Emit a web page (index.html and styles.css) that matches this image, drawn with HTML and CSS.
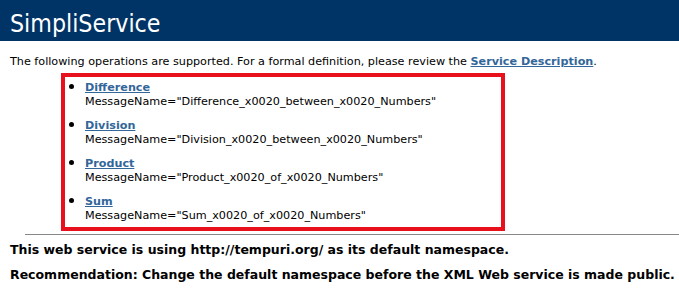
FILE: index.html
```html
<!DOCTYPE html>
<html>
<head>
<meta charset="utf-8">
<title>SimpliService Web Service</title>
<link rel="stylesheet" href="styles.css">
</head>
<body>
<div class="heading1">SimpliService</div>
<div class="content">
  <p class="intro">The following operations are supported. For a formal definition, please review the <a href="#">Service Description</a>.</p>
  <ul class="ops">
    <li><a href="#">Difference</a><br><span>MessageName="Difference_x0020_between_x0020_Numbers"</span></li>
    <li><a href="#">Division</a><br><span>MessageName="Division_x0020_between_x0020_Numbers"</span></li>
    <li><a href="#">Product</a><br><span>MessageName="Product_x0020_of_x0020_Numbers"</span></li>
    <li><a href="#">Sum</a><br><span>MessageName="Sum_x0020_of_x0020_Numbers"</span></li>
  </ul>
  <hr class="rule">
  <h3 class="ns first">This web service is using http://tempuri.org/ as its default namespace.</h3>
  <h3 class="ns">Recommendation: Change the default namespace before the XML Web service is made public.</h3>
</div>
</body>
</html>
```
FILE: styles.css
```css
html, body {
  margin: 0;
  padding: 0;
  background: #fff;
  color: #000;
  font-family: "DejaVu Sans", Verdana, sans-serif;
}
.heading1 {
  background: #003366;
  color: #fff;
  font-family: "DejaVu Sans Condensed", "DejaVu Sans", sans-serif;
  font-size: 24.7px;
  height: 41px;
  line-height: 48px;
  padding-left: 10px;
  box-sizing: border-box;
}
.content {
  font-size: 11.2px;
  line-height: 14px;
}
.intro {
  margin: 0;
  padding: 14px 0 0 10px;
}
a {
  color: #336699;
  font-weight: bold;
  text-decoration: underline;
}
.ops {
  margin: 4px 0 0 61px;
  width: 444px;
  box-sizing: border-box;
  border: 4px solid #e8101c;
  padding: 2px 0 4px 20px;
  list-style: disc;
}
.ops li::marker {
  font-size: 15px;
}
.ops li {
  margin-bottom: 8px;
}
.ops li:last-child {
  margin-bottom: 0;
}
.rule {
  margin: 3px 0 0 25px;
  border: 0;
  border-top: 1px solid #888;
  height: 0;
}
.ns {
  margin: 0;
  padding-left: 10px;
  font-size: 12.5px;
  line-height: 25px;
  white-space: nowrap;
}
.ns.first {
  padding-top: 2px;
}
```
